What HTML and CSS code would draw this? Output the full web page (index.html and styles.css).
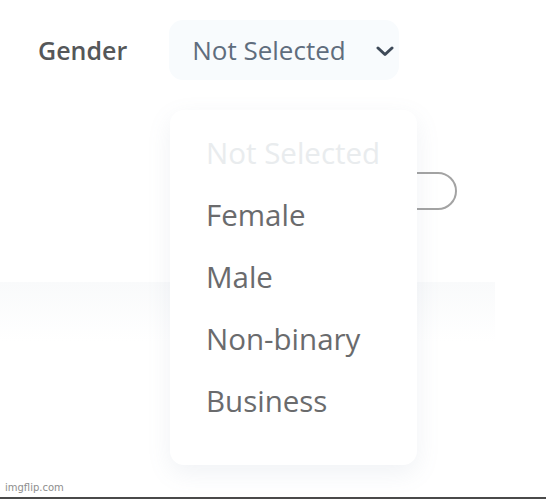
FILE: index.html
```html
<!DOCTYPE html>
<html>
<head>
<meta charset="utf-8">
<link rel="stylesheet" href="styles.css">
</head>
<body>
<div class="page">
  <div class="card">
    <div class="field">
      <span class="label">Gender</span>
      <div class="select">
        <span class="select-text">Not Selected</span>
        <svg class="chevron" width="18" height="11" viewBox="0 0 18 11"><polyline points="2,2 9,8.5 16,2" fill="none" stroke="#3e4a58" stroke-width="3" stroke-linecap="round" stroke-linejoin="round"/></svg>
      </div>
    </div>
    <div class="toggle"></div>
  </div>
  <div class="lower"></div>
  <ul class="menu">
    <li class="item placeholder">Not Selected</li>
    <li class="item">Female</li>
    <li class="item">Male</li>
    <li class="item">Non-binary</li>
    <li class="item">Business</li>
  </ul>
  <div class="footer"><span class="watermark">imgflip.com</span></div>
</div>
</body>
</html>
```
FILE: styles.css
```css
html, body {
  margin: 0;
  padding: 0;
  background: #ffffff;
  font-family: "Open Sans", "Noto Sans", sans-serif;
}
.page {
  position: relative;
  width: 546px;
  height: 499px;
  overflow: hidden;
  display: flex;
  flex-direction: column;
}
.card {
  position: relative;
  width: 495px;
  height: 282px;
  background: #ffffff;
}
.field {
  display: flex;
  align-items: center;
  padding: 20px 0 0 38px;
  gap: 42px;
}
.label {
  font-size: 25px;
  font-weight: 600;
  color: #555759;
  line-height: 34px;
}
.select {
  display: flex;
  align-items: center;
  height: 60px;
  width: 230px;
  box-sizing: border-box;
  padding-left: 23px;
  background: #f8fbfd;
  border-radius: 14px;
}
.select-text {
  font-size: 26px;
  color: #5f6d7d;
  line-height: 34px;
}
.chevron {
  margin-left: 30px;
  margin-top: 3px;
}
.toggle {
  position: absolute;
  left: 380px;
  top: 172px;
  width: 77px;
  height: 38px;
  box-sizing: border-box;
  border: 2px solid #a3a3a3;
  border-radius: 19px;
}
.lower {
  width: 495px;
  height: 60px;
  background: linear-gradient(#f9fafb, #ffffff);
}
.menu {
  position: absolute;
  left: 170px;
  top: 110px;
  width: 247px;
  height: 355px;
  margin: 0;
  padding: 12px 0 0 0;
  box-sizing: border-box;
  list-style: none;
  background: #ffffff;
  border-radius: 14px;
  box-shadow: 0 8px 24px rgba(120, 140, 160, 0.11);
  z-index: 2;
}
.item {
  font-size: 29.5px;
  line-height: 62px;
  height: 62px;
  padding-left: 36px;
  color: #6a6b6d;
}
.placeholder {
  color: #e9ecee;
}
.footer {
  margin-top: auto;
  height: 20px;
  border-bottom: 2px solid #4a4a4a;
  display: flex;
  align-items: center;
}
.watermark {
  padding-left: 5px;
  font-family: "DejaVu Sans", sans-serif;
  font-size: 10px;
  color: #8e8e8e;
}
```
